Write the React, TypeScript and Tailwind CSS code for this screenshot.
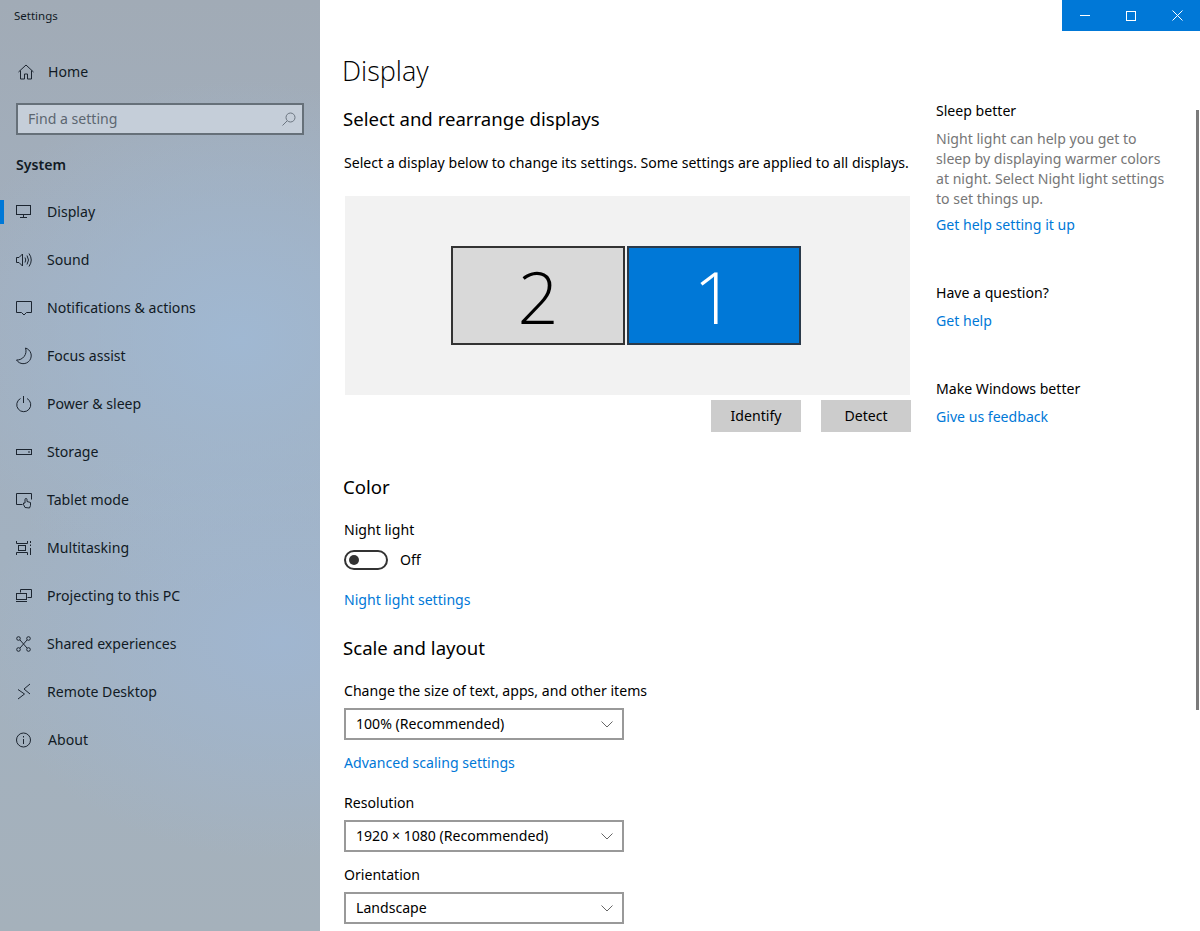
import { JSX, ReactNode } from "react";

const font = "font-['Noto_Sans',sans-serif]";

function Icon({ children }: { children: ReactNode }): JSX.Element {
    return (
        <svg width="18" height="18" viewBox="0 0 18 18" fill="none" stroke="#1c2530" strokeWidth="1" className="shrink-0">
            {children}
        </svg>
    );
}

const navItems: { label: string; active?: boolean; icon: JSX.Element; textClass?: string }[] = [
    { label: "Display", active: true, icon: <><rect x="0.500" y="2.500" width="14" height="9" /><path d="M7.500 11.500v2.500M4 14.500h7" /></> },
    { label: "Sound", icon: <><path d="M0.500 6.500h2.500l3.500-3.500v12L3 11.500H0.500z" /><path d="M9 6.500q1.500 2.500 0 5M11 4.500q3 4.500 0 9M13 2.500q4.500 6.500 0 13" /></> },
    { label: "Notifications & actions", icon: <path d="M0.500 2.500h15v11h-5l-2.500 2.500-2.500-2.500h-5z" /> },
    { label: "Focus assist", icon: <path d="M9.500 1A9 9 0 0 1 0.500 13A8 8 0 1 0 9.500 1z" /> },
    { label: "Power & sleep", icon: <><path d="M4.500 3.500a7 7 0 1 0 6.500 0" /><path d="M7.500 1v7" /></> },
    { label: "Storage", icon: <><rect x="0.500" y="6.500" width="15" height="5" /><path d="M12 9h2" /></> },
    { label: "Tablet mode", icon: <><path d="M6.500 13.500h-6v-11h15v6" /><path d="M9 16.500l-1.500-3v-1.500h1.500v-3.500a1 1 0 0 1 2 0v2l3.500 1v3l-1 2.500z" /></> },
    { label: "Multitasking", icon: <><path d="M0.500 2v2.500h11v-2.500M0.500 16v-2.500h11v2.500" /><rect x="2.500" y="6.500" width="7" height="5" /><path d="M14.500 2v2M14.500 5.500v1.500M14.500 9v7" /></> },
    { label: "Projecting to this PC", icon: <><path d="M4.500 5.500v-3h11v8h-4" /><rect x="0.500" y="6.500" width="10" height="6" /><path d="M0 14.500h11" /></> },
    { label: "Shared experiences", icon: <><circle cx="2.500" cy="3.500" r="1.800" /><circle cx="12.500" cy="3.500" r="1.800" /><circle cx="2.500" cy="14.500" r="1.800" /><circle cx="12.500" cy="14.500" r="1.800" /><path d="M4 5l7 8M11 5l-7 8" /></> },
    { label: "Remote Desktop", icon: <><path d="M2 6.500l6.500 4.500-6.500 5" /><path d="M14 1l-6 5 6 5" /></> },
    { label: "About", textClass: "ml-[14px]", icon: <><circle cx="7.500" cy="9" r="7" /><path d="M7.500 8v5M7.500 5v1.500" /></> },
];

function Chevron(): JSX.Element {
    return (
        <svg width="12" height="7" viewBox="0 0 12 7" fill="none" stroke="#666" strokeWidth="1">
            <path d="M0.500 0.500l5.500 5.500 5.500-5.500" />
        </svg>
    );
}

function Select({ value }: { value: string }): JSX.Element {
    return (
        <div className="flex h-8 w-[280px] items-center justify-between border-2 border-[#999] pl-[10px] pr-[9px] text-[14.100px] text-black">
            <span>{value}</span>
            <Chevron />
        </div>
    );
}

function Link({ children }: { children: ReactNode }): JSX.Element {
    return <div className="text-[14.100px] leading-5 text-[#0078d7]">{children}</div>;
}

function Tile({ n, active }: { n: string; active?: boolean }): JSX.Element {
    return (
        <div className={active
            ? "flex h-[99px] w-[174px] items-center justify-center border-2 border-[#2b3a4a] bg-[#0078d7] text-[72px] font-light text-white"
            : "flex h-[99px] w-[174px] items-center justify-center border-2 border-[#333] bg-[#d9d9d9] text-[72px] font-light text-black"}>
            <span className="font-['Open_Sans',sans-serif] leading-none">{n}</span>
        </div>
    );
}

function App(): JSX.Element {
    return (
        <div className={`flex h-[931px] w-[1200px] overflow-hidden bg-white ${font}`}>
            <aside className="flex w-[320px] shrink-0 flex-col bg-[radial-gradient(ellipse_300px_260px_at_240px_340px,#a0b8d2_0%,transparent_100%),radial-gradient(ellipse_300px_220px_at_280px_640px,#a0b6d0_0%,transparent_100%),linear-gradient(180deg,#a1abb6_0%,#a2afbe_30%,#a2b1c0_60%,#a5b1bb_100%)] text-[#111a24]">
                <div className="flex h-8 items-center pl-[14px] text-[11.500px]">Settings</div>
                <div className="mt-5 flex h-10 items-center gap-[13px] pl-[17px] text-[14.100px]">
                    <Icon><path d="M1.500 9l7.500-7 7.500 7M3.500 7.500v8.500h4v-5h3v5h4v-8.500" /></Icon>
                    <span>Home</span>
                </div>
                <div className="mx-4 mt-[11px] flex h-8 items-center justify-between border-2 border-[#667079] bg-[#c5ced9] pl-[10px] pr-[6px] text-[14.100px] text-[#5c6670]">
                    <span>Find a setting</span>
                    <svg width="14" height="14" viewBox="0 0 14 14" fill="none" stroke="#6b7580" strokeWidth="1">
                        <circle cx="8.500" cy="5.500" r="4.500" />
                        <path d="M5 9l-4.500 4.500" />
                    </svg>
                </div>
                <div className="mt-5 pl-4 text-[14.100px] font-semibold leading-5">System</div>
                <nav className="mt-[13px] flex flex-col">
                    {navItems.map((item) => (
                        <div key={item.label} className="flex h-12 items-center text-[14.100px]">
                            <div className={item.active ? "h-6 w-1 bg-[#0078d7]" : "h-6 w-1"} />
                            <div className="ml-3">
                                <Icon>{item.icon}</Icon>
                            </div>
                            <span className={item.textClass ?? "ml-[13px]"}>{item.label}</span>
                        </div>
                    ))}
                </nav>
            </aside>

            <main className="flex min-w-0 flex-1 flex-col">
                <div className="flex justify-end">
                    <div className="flex h-[31px] w-[138px] items-center bg-[#0078d7]">
                        <div className="flex w-[46px] justify-center">
                            <div className="h-px w-[10px] bg-white" />
                        </div>
                        <div className="flex w-[46px] justify-center">
                            <div className="h-[10px] w-[10px] border border-white" />
                        </div>
                        <div className="flex w-[46px] justify-center">
                            <svg width="11" height="11" viewBox="0 0 11 11" stroke="white" strokeWidth="1">
                                <path d="M0.500 0.500l10 10M10.500 0.500l-10 10" />
                            </svg>
                        </div>
                    </div>
                </div>

                <div className="flex flex-1">
                    <div className="w-[616px] shrink-0 pl-[22px] text-black">
                        <h1 className="mt-[21px] font-['Open_Sans',sans-serif] text-[27px] font-light leading-[38px]">Display</h1>
                        <h2 className="mt-4 pl-px text-[18.600px] leading-[26px]">Select and rearrange displays</h2>
                        <p className="mt-[21px] pl-0.5 text-[14.100px] leading-5 whitespace-nowrap">Select a display below to change its settings. Some settings are applied to all displays.</p>

                        <div className="ml-[3px] mt-[23px] flex h-[199px] w-[565px] items-center justify-center gap-0.5 bg-[#f2f2f2] pr-[3px]">
                            <Tile n="2" />
                            <Tile n="1" active />
                        </div>
                        <div className="ml-[3px] mt-[5px] flex w-[566px] justify-end gap-5">
                            <div className="flex h-8 w-[90px] items-center justify-center bg-[#cccccc] text-[14.100px]">Identify</div>
                            <div className="flex h-8 w-[90px] items-center justify-center bg-[#cccccc] text-[14.100px]">Detect</div>
                        </div>

                        <h2 className="mt-[42px] pl-px text-[18.600px] leading-[26px]">Color</h2>
                        <div className="mt-5 pl-0.5 text-[14.100px] leading-5">Night light</div>
                        <div className="ml-0.5 mt-[10px] flex items-center gap-3 text-[14.100px] leading-5">
                            <div className="flex h-5 w-11 items-center rounded-full border-2 border-[#333] pl-[3px]">
                                <div className="h-[10px] w-[10px] rounded-full bg-[#333]" />
                            </div>
                            <span>Off</span>
                        </div>
                        <div className="ml-0.5 mt-5"><Link>Night light settings</Link></div>

                        <h2 className="mt-[25px] pl-px text-[18.600px] leading-[26px]">Scale and layout</h2>
                        <div className="mt-5 pl-0.5 text-[14.100px] leading-5">Change the size of text, apps, and other items</div>
                        <div className="ml-0.5 mt-[7px]"><Select value="100% (Recommended)" /></div>
                        <div className="ml-0.5 mt-[13px]"><Link>Advanced scaling settings</Link></div>
                        <div className="mt-5 pl-0.5 text-[14.100px] leading-5">Resolution</div>
                        <div className="ml-0.5 mt-[7px]"><Select value="1920 × 1080 (Recommended)" /></div>
                        <div className="mt-[13px] pl-0.5 text-[14.100px] leading-5">Orientation</div>
                        <div className="ml-0.5 mt-[7px]"><Select value="Landscape" /></div>
                    </div>

                    <aside className="flex-1 pt-[70px] text-[14.100px] leading-5">
                        <div className="text-black">Sleep better</div>
                        <p className="mt-2 w-[235px] text-[#767676]">Night light can help you get to sleep by displaying warmer colors at night. Select Night light settings to set things up.</p>
                        <div className="mt-1.5"><Link>Get help setting it up</Link></div>
                        <div className="mt-12 text-black">Have a question?</div>
                        <div className="mt-2"><Link>Get help</Link></div>
                        <div className="mt-12 text-black">Make Windows better</div>
                        <div className="mt-2"><Link>Give us feedback</Link></div>
                    </aside>

                    <div className="mt-[79px] h-[600px] w-[3px] shrink-0 self-start bg-[#7a7a7a]" />
                    <div className="w-px" />
                </div>
            </main>
        </div>
    );
}

export default App;
